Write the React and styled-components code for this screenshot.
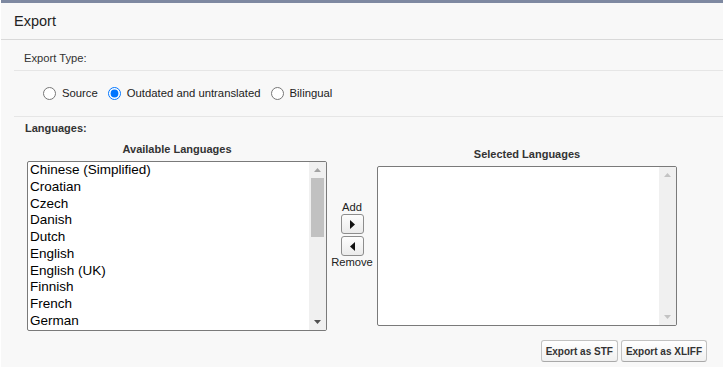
import React from "react";
import styled, { createGlobalStyle } from "styled-components";

const GlobalStyle = createGlobalStyle`
  html, body {
    margin: 0;
    padding: 0;
    background: #ffffff;
  }
  body {
    font-family: "Liberation Sans", Arial, sans-serif;
    color: #333;
  }
  * { box-sizing: border-box; }
`;

const Panel = styled.div`
  margin-left: 1px;
  min-height: 100vh;
  background: #f8f8f8;
  border-top: 3px solid #7e89a1;
`;

const Header = styled.div`
  height: 37px;
  display: flex;
  align-items: center;
  padding-left: 13px;
  border-bottom: 1px solid #d9d9d9;
  font-size: 14.5px;
  color: #222;
`;

const Body = styled.div`
  padding-left: 13px;
`;

const FieldRow = styled.div`
  padding: ${(p) => p.$pt}px 0 ${(p) => p.$pb}px ${(p) => p.$pl}px;
  border-bottom: 1px solid #e6e6e6;
  font-size: 11.2px;
  line-height: 13px;
  color: #333;
`;

const RadioGroup = styled.div`
  display: flex;
  align-items: center;
`;

const RadioOption = styled.label`
  display: flex;
  align-items: center;
  gap: 6px;
  margin-right: 10px;
  font-size: 11.3px;
  line-height: 13px;
  color: #222;
`;

const Radio = styled.input`
  margin: 0;
  width: 13px;
  height: 13px;
`;

const LanguagesSection = styled.div`
  padding-top: 5px;
`;

const SectionLabel = styled.div`
  padding-left: 11px;
  font-size: 11px;
  line-height: 13px;
  font-weight: bold;
  color: #333;
`;

const Transfer = styled.div`
  display: grid;
  grid-template-columns: 300px 50px 300px;
  align-items: center;
  margin-top: 8px;
  padding-left: 13px;
`;

const ListColumn = styled.div`
  display: flex;
  flex-direction: column;
  gap: 5px;
`;

const ColumnTitle = styled.div`
  text-align: center;
  font-size: 11px;
  line-height: 13px;
  font-weight: bold;
  color: #333;
`;

const ListBox = styled.div`
  height: ${(p) => p.$height}px;
  display: flex;
  background: #fff;
  border: 1px solid #7a7a7a;
  border-radius: 2px;
  overflow: hidden;
`;

const Options = styled.div`
  flex: 1;
  padding-left: 2px;
  overflow: hidden;
`;

const Option = styled.div`
  font-size: 13.5px;
  line-height: 16.75px;
  color: #000;
  white-space: nowrap;
`;

const ScrollTrack = styled.div`
  width: 17px;
  display: flex;
  flex-direction: column;
  background: #f0f0f0;
`;

const ScrollArrow = styled.div`
  height: 16px;
  display: flex;
  align-items: center;
  justify-content: center;
  margin-top: ${(p) => (p.$down ? "auto" : "0")};
`;

const ScrollThumb = styled.div`
  height: 59px;
  margin: 0 2px 0 2px;
  background: #c1c1c1;
`;

const MoveControls = styled.div`
  display: flex;
  flex-direction: column;
  align-items: center;
  gap: 2px;
  margin-bottom: 4px;
  font-size: 11.2px;
  line-height: 13px;
  color: #222;
`;

const MoveLabel = styled.div`
  margin-bottom: -2px;
  &:last-child {
    margin-top: -2px;
    margin-bottom: 0;
  }
`;

const MoveButton = styled.button`
  width: 23px;
  height: 20px;
  padding: 0;
  display: flex;
  align-items: center;
  justify-content: center;
  border: 1px solid #8d8d8d;
  border-radius: 3px;
  background: linear-gradient(#fdfdfd, #ebebeb);
`;

const Actions = styled.div`
  display: flex;
  justify-content: flex-end;
  gap: 3px;
  margin-top: 9px;
  padding-right: 16px;
`;

const ActionButton = styled.button`
  height: 22px;
  padding: 0 4px;
  font-family: "Liberation Sans", Arial, sans-serif;
  font-size: 10px;
  font-weight: bold;
  color: #333;
  border: 1px solid #c2c2c2;
  border-bottom-color: #a9a9a9;
  border-radius: 3px;
  background: linear-gradient(#ffffff, #f0f0f0);
`;

const Triangle = ({ dir, color }) => {
  const paths = {
    up: "M0 4 L3.5 0 L7 4 Z",
    down: "M0 0 L7 0 L3.5 4 Z",
  };
  return (
    <svg width="7" height="4" viewBox="0 0 7 4">
      <path d={paths[dir]} fill={color} />
    </svg>
  );
};

const Caret = ({ dir }) => (
  <svg width="5" height="9" viewBox="0 0 5 9">
    <path d={dir === "right" ? "M0 0 L5 4.5 L0 9 Z" : "M5 0 L0 4.5 L5 9 Z"} fill="#111" />
  </svg>
);

const available = [
  "Chinese (Simplified)",
  "Croatian",
  "Czech",
  "Danish",
  "Dutch",
  "English",
  "English (UK)",
  "Finnish",
  "French",
  "German",
];

export default function App() {
  return (
    <>
      <GlobalStyle />
      <Panel>
        <Header>Export</Header>
        <Body>
          <FieldRow $pt={12} $pb={5} $pl={10}>Export Type:</FieldRow>
          <FieldRow $pt={16} $pb={16} $pl={29}>
            <RadioGroup>
              <RadioOption>
                <Radio type="radio" name="type" />
                Source
              </RadioOption>
              <RadioOption>
                <Radio type="radio" name="type" defaultChecked />
                Outdated and untranslated
              </RadioOption>
              <RadioOption>
                <Radio type="radio" name="type" />
                Bilingual
              </RadioOption>
            </RadioGroup>
          </FieldRow>
          <LanguagesSection>
            <SectionLabel>Languages:</SectionLabel>
            <Transfer>
              <ListColumn>
                <ColumnTitle>Available Languages</ColumnTitle>
                <ListBox $height={170}>
                  <Options>
                    {available.map((l) => (
                      <Option key={l}>{l}</Option>
                    ))}
                  </Options>
                  <ScrollTrack>
                    <ScrollArrow>
                      <Triangle dir="up" color="#a3a3a3" />
                    </ScrollArrow>
                    <ScrollThumb />
                    <ScrollArrow $down>
                      <Triangle dir="down" color="#505050" />
                    </ScrollArrow>
                  </ScrollTrack>
                </ListBox>
              </ListColumn>
              <MoveControls>
                <MoveLabel>Add</MoveLabel>
                <MoveButton aria-label="Add">
                  <Caret dir="right" />
                </MoveButton>
                <MoveButton aria-label="Remove">
                  <Caret dir="left" />
                </MoveButton>
                <MoveLabel>Remove</MoveLabel>
              </MoveControls>
              <ListColumn>
                <ColumnTitle>Selected Languages</ColumnTitle>
                <ListBox $height={160}>
                  <Options />
                  <ScrollTrack>
                    <ScrollArrow>
                      <Triangle dir="up" color="#c3c3c3" />
                    </ScrollArrow>
                    <ScrollArrow $down>
                      <Triangle dir="down" color="#c3c3c3" />
                    </ScrollArrow>
                  </ScrollTrack>
                </ListBox>
              </ListColumn>
            </Transfer>
            <Actions>
              <ActionButton>Export as STF</ActionButton>
              <ActionButton>Export as XLIFF</ActionButton>
            </Actions>
          </LanguagesSection>
        </Body>
      </Panel>
    </>
  );
}
